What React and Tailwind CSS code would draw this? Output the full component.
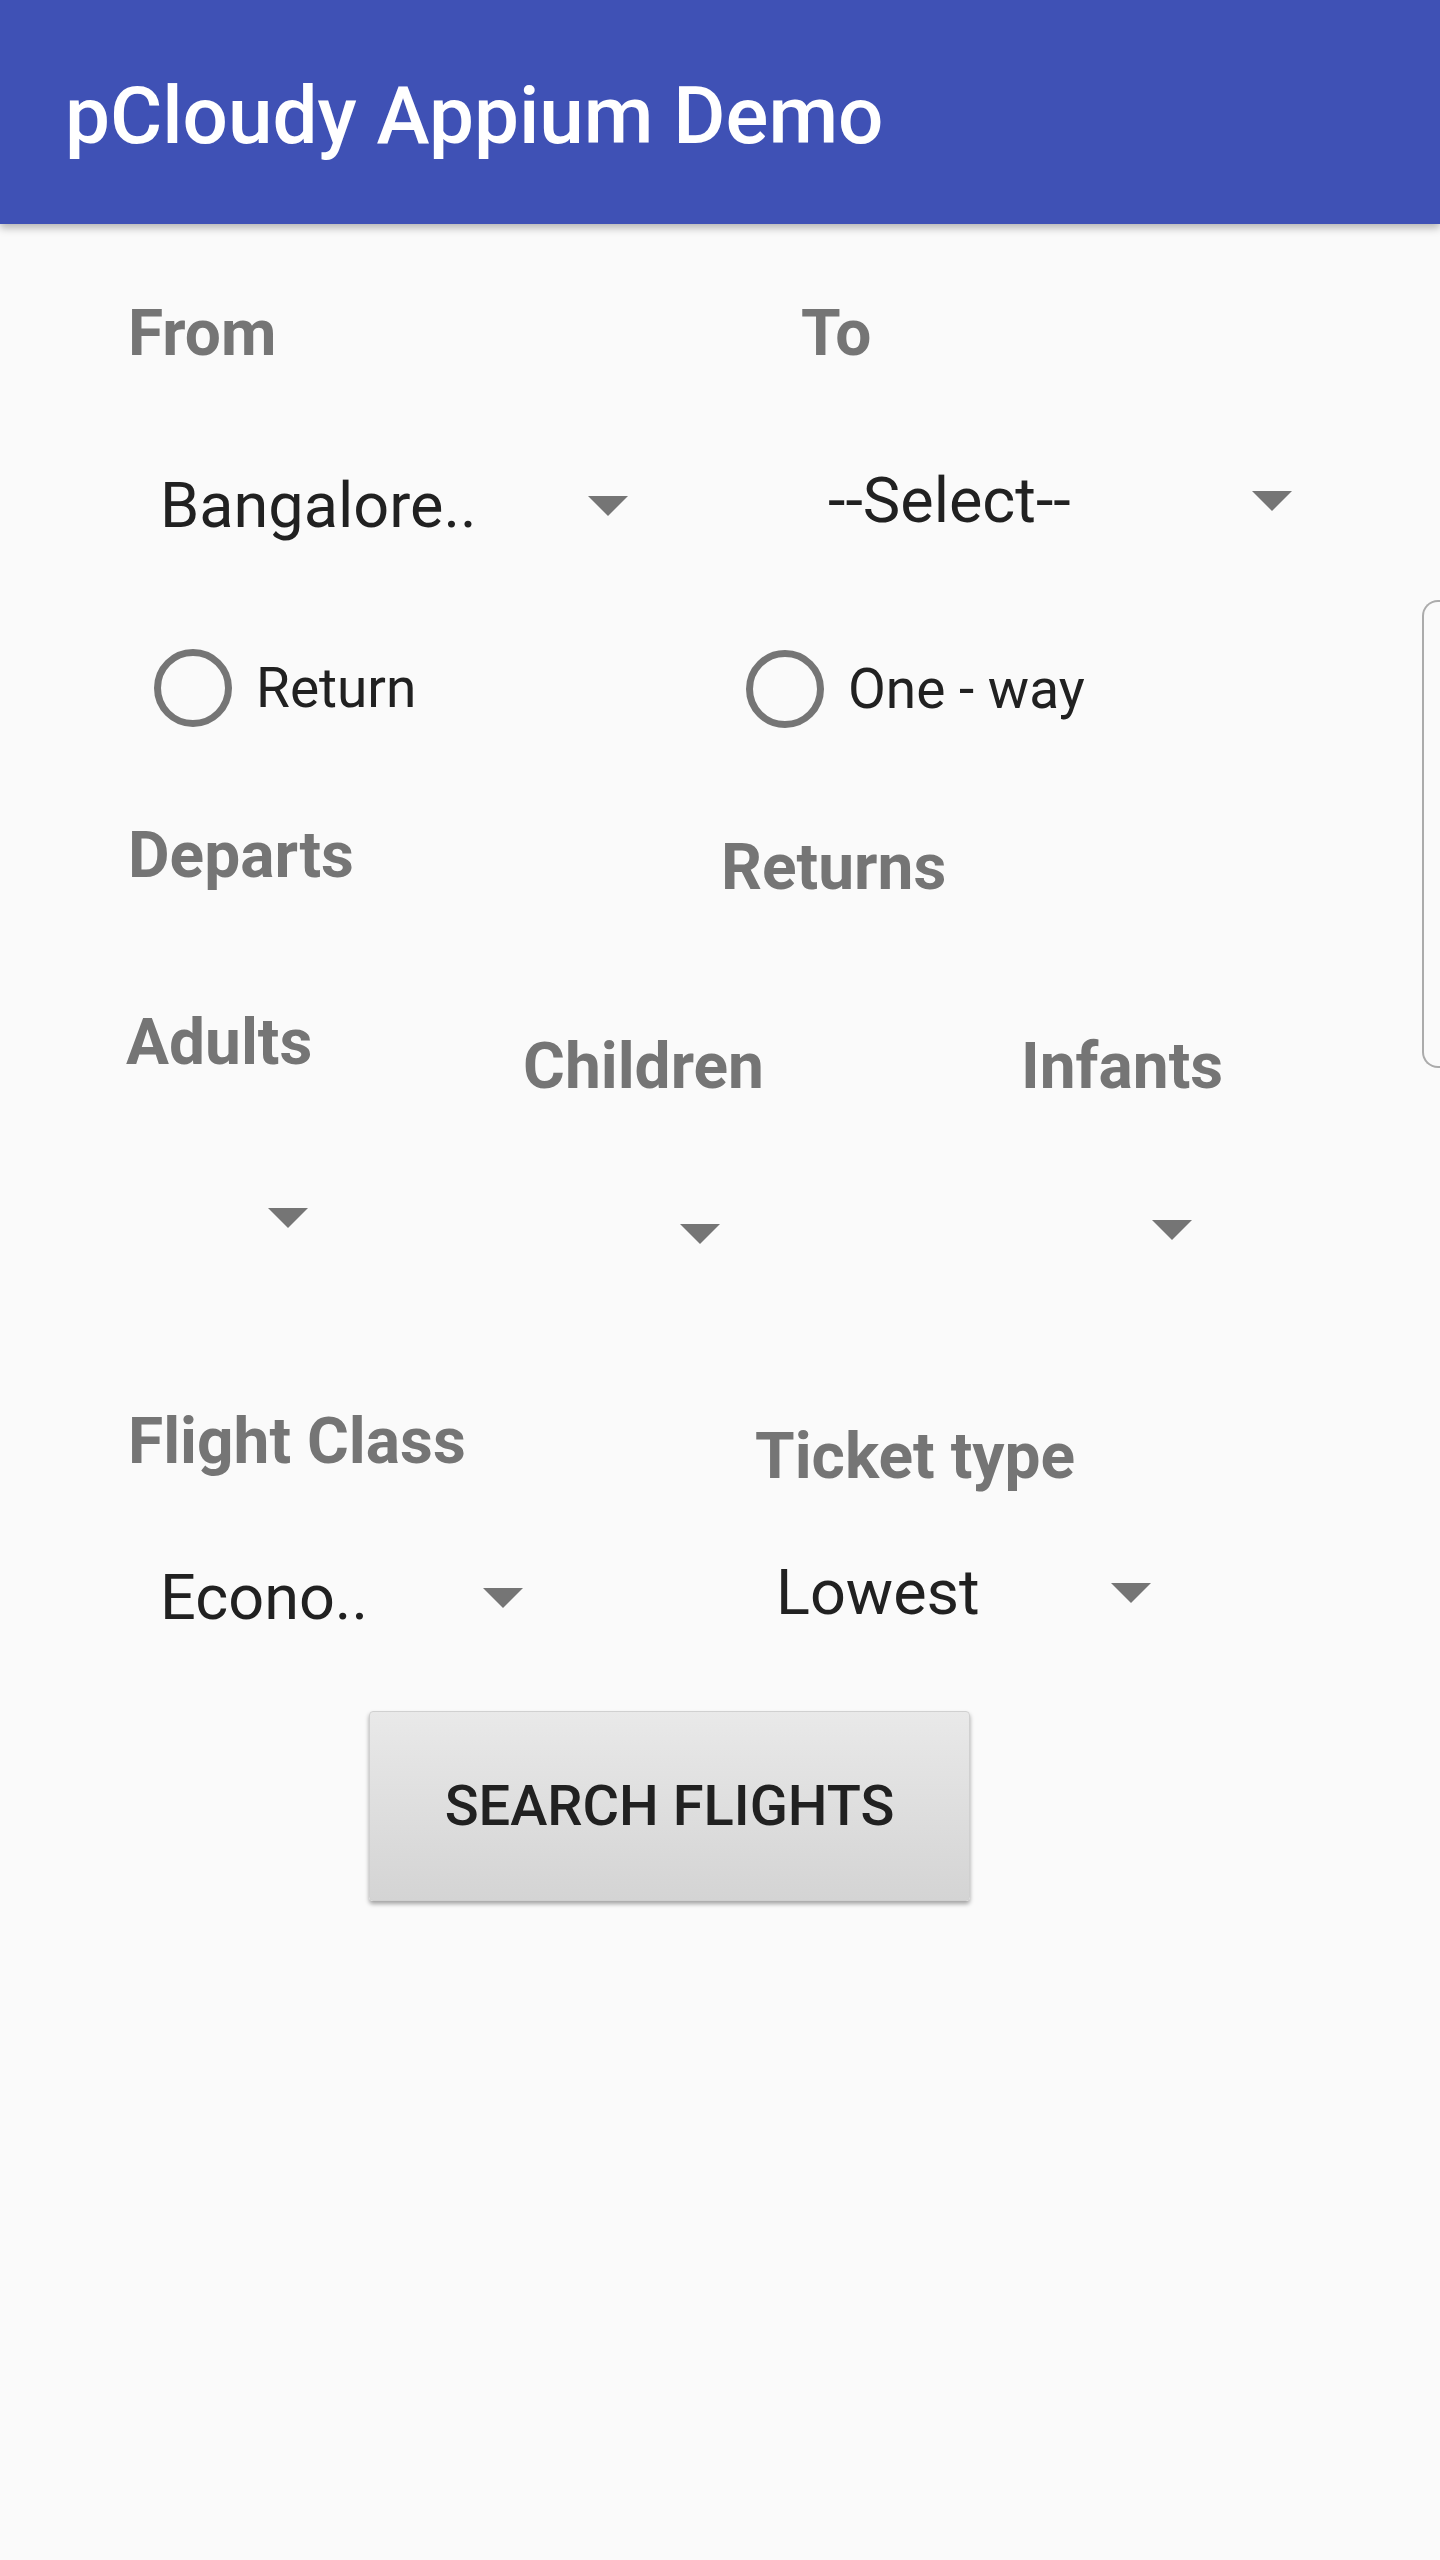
import React from "react"

// dropdown caret used by every spinner
const Caret = ({ className = "" }) => (
  <svg width="40" height="20" viewBox="0 0 40 20" className={className}>
    <polygon points="0,0 40,0 20,20" fill="#757575" />
  </svg>
)

const Label = ({ children, className = "" }) => (
  <div className={`text-[64px] leading-[62px] font-bold text-[#757575] whitespace-nowrap ${className}`}>
    {children}
  </div>
)

const Spinner = ({ value, className = "" }) => (
  <div className={`flex items-center justify-between ${className}`}>
    <span className="text-[63px] leading-none text-[#212121] whitespace-nowrap">{value}</span>
    <Caret />
  </div>
)

const Radio = ({ label, className = "" }) => (
  <div className={`flex items-center ${className}`}>
    <span className="block w-[78px] h-[78px] rounded-full border-[7px] border-[#757575]" />
    <span className="ml-[24px] text-[55px] leading-none text-[#212121] whitespace-nowrap">{label}</span>
  </div>
)

export default function App() {
  return (
    <div
      className="relative min-h-[2560px] w-[1440px] bg-[#fafafa] overflow-hidden"
      style={{ fontFamily: "Roboto, 'Noto Sans', sans-serif" }}
    >
      {/* app bar */}
      <div className="relative z-10 h-[224px] bg-[#3f51b5] pl-[65px] pt-[76px] shadow-[0_4px_8px_rgba(0,0,0,0.28)]">
        <h1 className="text-[80px] leading-none font-medium text-white">pCloudy Appium Demo</h1>
      </div>

      {/* From / To */}
      <div className="flex pl-[128px] mt-[79px]">
        <Label className="w-[673px]">From</Label>
        <Label>To</Label>
      </div>

      <div className="flex items-start pl-[160px] mt-[104px]">
        <Spinner value="Bangalore.." className="w-[468px] mt-[5px]" />
        <Spinner value="--Select--" className="w-[464px] ml-[200px]" />
      </div>

      {/* trip type */}
      <div className="flex pl-[154px] mt-[111px]">
        <Radio label="Return" className="w-[592px]" />
        <Radio label="One - way" className="mt-[2px]" />
      </div>

      {/* dates */}
      <div className="flex items-start pl-[128px] mt-[97px]">
        <Label className="w-[593px]">Departs</Label>
        <Label className="mt-[12px]">Returns</Label>
      </div>

      {/* passengers */}
      <div className="flex items-start pl-[126px] mt-[113px]">
        <Label className="w-[397px]">Adults</Label>
        <Label className="w-[498px] mt-[24px]">Children</Label>
        <Label className="mt-[24px]">Infants</Label>
      </div>

      <div className="flex items-start pl-[268px] mt-[110px]">
        <div className="w-[412px]">
          <Caret />
        </div>
        <div className="w-[472px] mt-[16px]">
          <Caret />
        </div>
        <div className="mt-[12px]">
          <Caret />
        </div>
      </div>

      {/* class / ticket */}
      <div className="flex items-start pl-[128px] mt-[167px]">
        <Label className="w-[627px]">Flight Class</Label>
        <Label className="mt-[15px]">Ticket type</Label>
      </div>

      <div className="flex items-start pl-[160px] mt-[73px]">
        <Spinner value="Econo.." className="w-[363px] mt-[5px]" />
        <Spinner value="Lowest" className="w-[375px] ml-[253px]" />
      </div>

      <div className="pl-[369px] mt-[82px]">
        <button className="w-[601px] h-[190px] rounded-[4px] border border-[#d0d0d0] bg-gradient-to-b from-[#e9e9e9] to-[#d4d4d4] shadow-[0_3px_4px_rgba(0,0,0,0.35)] text-[56px] leading-none font-medium text-[#212121]">
          SEARCH FLIGHTS
        </button>
      </div>

      {/* edge panel handle */}
      <div className="absolute left-[1422px] top-[600px] w-[40px] h-[468px] border-2 border-r-0 border-[#ababab] rounded-l-[16px]" />
    </div>
  )
}
